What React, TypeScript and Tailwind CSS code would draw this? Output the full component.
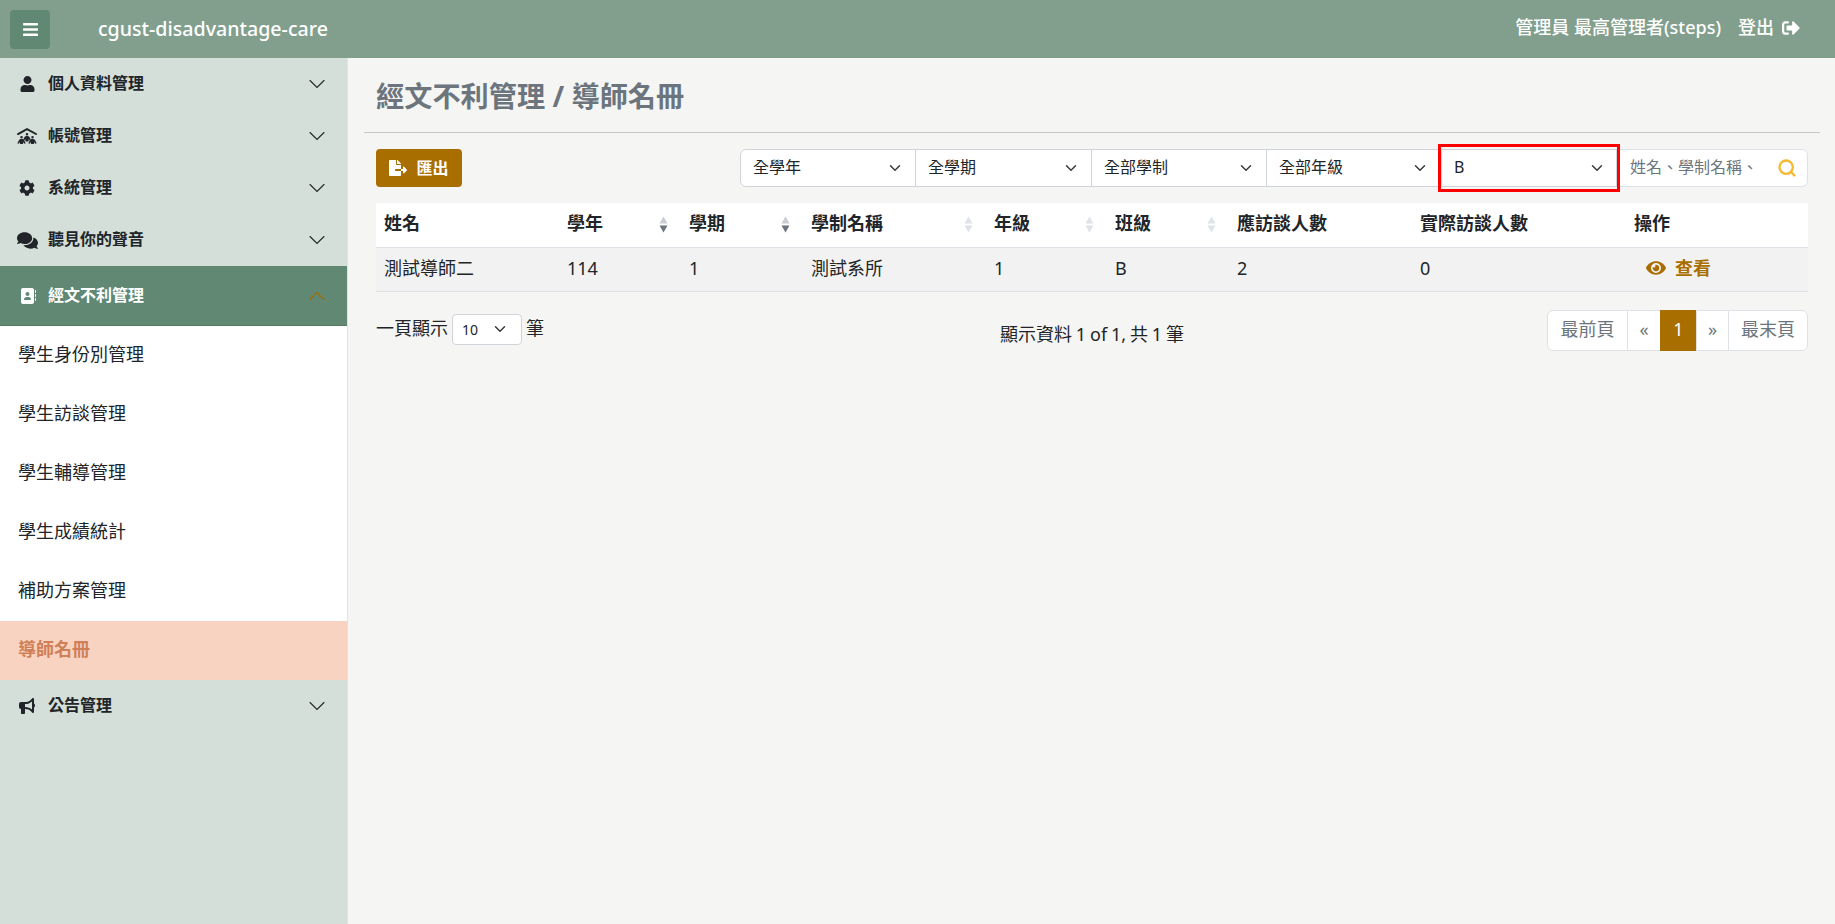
import { ReactNode } from "react";
import { FaBars, FaCog, FaComments, FaEye, FaFileExport, FaSignOutAlt, FaUser } from "react-icons/fa";
import { FaAddressBook, FaBullhorn, FaPeopleRoof } from "react-icons/fa6";
import { Search } from "lucide-react";

function Chevron({ up = false, className = "" }: { up?: boolean; className?: string }) {
    return (
        <svg viewBox="0 0 16 16" className={className} fill="none" stroke="currentColor" strokeWidth="1.1" strokeLinecap="round">
            <path d={up ? "M1 11.5l7-7 7 7" : "M1 4.5l7 7 7-7"} />
        </svg>
    );
}

function SmallChevron({ className = "" }: { className?: string }) {
    return (
        <svg viewBox="0 0 16 16" className={className} fill="none" stroke="#343a40" strokeWidth="2" strokeLinecap="round" strokeLinejoin="round">
            <path d="M2 5l6 6 6-6" />
        </svg>
    );
}

function MenuItem({ icon, label }: { icon: ReactNode; label: string }) {
    return (
        <div className="h-[52px] flex items-center pl-[17px] pr-[22px] text-[#212529]">
            <span className="w-[31px] flex text-[16px]">{icon}</span>
            <span className="flex-1 pb-[2px] text-[16px] font-bold">{label}</span>
            <Chevron className="w-4 h-4" />
        </div>
    );
}

function SubItem({ label, active = false }: { label: string; active?: boolean }) {
    return (
        <div className={active
            ? "h-[59px] flex items-center pl-[18px] pb-[2px] text-[18px] font-bold bg-[#f8d3c1] text-[#d08058]"
            : "h-[59px] flex items-center pl-[18px] pb-[2px] text-[18px] text-[#212529] bg-white"}>
            {label}
        </div>
    );
}

function FilterSelect({ label, className }: { label: string; className: string }) {
    return (
        <div className={"h-[38px] flex items-center justify-between pl-[12px] pr-[14px] bg-white border border-[#ced4da] " + className}>
            <span className="pb-[2px] text-[16px] text-[#212529]">{label}</span>
            <SmallChevron className="w-3 h-3" />
        </div>
    );
}

function SortIcon({ active = false }: { active?: boolean }) {
    return (
        <svg viewBox="0 0 9 17" className="w-[9px] h-[17px] shrink-0">
            <path d="M4.5 0.5l4 7h-8z" fill={active ? "#c9ccd1" : "#dfe2e6"} />
            <path d="M4.5 16.5l4-7h-8z" fill={active ? "#6c757d" : "#dfe2e6"} />
        </svg>
    );
}

function HeaderCell({ label, sort, active }: { label: string; sort?: boolean; active?: boolean }) {
    return (
        <th className="pl-2 pr-[13px] text-left font-bold text-[#212529] text-[18px]">
            <div className="flex items-center justify-between">
                <span className="pb-[2px]">{label}</span>
                {sort && <SortIcon active={active} />}
            </div>
        </th>
    );
}

const pageLink = "h-[41px] pb-[2px] flex items-center justify-center text-[#6c757d] bg-white border border-[#dee2e6] -ml-px";

export default function App() {
    return (
        <div className="w-full h-[924px] flex flex-col overflow-hidden bg-[#f5f5f3] font-['Noto_Sans','Noto_Sans_CJK_TC',sans-serif] text-[16px] text-[#212529]">
            <header className="h-[58px] shrink-0 bg-[#829f8e] flex items-center pl-[10px] pr-[35px] text-white">
                <button className="w-[40px] h-[39px] rounded-[4px] bg-[#618872] flex items-center justify-center">
                    <FaBars className="w-[17px] h-[17px]" />
                </button>
                <span className="ml-[48px] pb-[1px] text-[19.6px] font-medium">cgust-disadvantage-care</span>
                <span className="ml-auto pb-[3px] text-[18px] font-medium">管理員 最高管理者(steps)</span>
                <span className="ml-[17px] pb-[3px] text-[18px] font-medium">登出</span>
                <FaSignOutAlt className="ml-[8px] mb-[2px] w-[18px] h-[18px]" />
            </header>

            <div className="flex-1 flex min-h-0">
                <aside className="w-[348px] shrink-0 bg-[#d4dfd9] border-r border-[#dfe2e6]">
                    <MenuItem icon={<FaUser className="ml-[3px] w-[15px] h-[16px]" />} label="個人資料管理" />
                    <MenuItem icon={<FaPeopleRoof className="w-[20px] h-[16px]" />} label="帳號管理" />
                    <MenuItem icon={<FaCog className="ml-[2px] w-[16px] h-[16px]" />} label="系統管理" />
                    <MenuItem icon={<FaComments className="w-[21px] h-[19px]" />} label="聽見你的聲音" />
                    <div className="h-[60px] flex items-center pl-[20px] pr-[22px] bg-[#618872] border-b border-[#54775f] text-white">
                        <FaAddressBook className="w-[16px] h-[16px]" />
                        <span className="ml-[12px] pb-[2px] flex-1 text-[16px] font-bold">經文不利管理</span>
                        <Chevron up className="w-4 h-4 text-[#a56c00]" />
                    </div>
                    <SubItem label="學生身份別管理" />
                    <SubItem label="學生訪談管理" />
                    <SubItem label="學生輔導管理" />
                    <SubItem label="學生成績統計" />
                    <SubItem label="補助方案管理" />
                    <SubItem label="導師名冊" active />
                    <MenuItem icon={<FaBullhorn className="ml-[2px] w-[16px] h-[16px]" />} label="公告管理" />
                </aside>

                <main className="flex-1 min-w-0 pl-[16px] pr-[15px]">
                    <div className="h-[75px] border-b border-[#c4c6c6] flex items-center pl-[12px] pt-[3px]">
                        <h1 className="text-[28.2px] font-bold text-[#6c757d]">經文不利管理 / 導師名冊</h1>
                    </div>

                    <div className="pl-[12px] pr-[12px]">
                        <div className="mt-[16px] flex items-center h-[38px]">
                            <button className="w-[86px] h-[38px] rounded-[4px] bg-[#a96e00] text-white flex items-center justify-center gap-[9px]">
                                <FaFileExport className="w-[18px] h-[16px]" />
                                <span className="text-[16px] font-bold">匯出</span>
                            </button>
                            <div className="ml-auto flex items-center">
                                <FilterSelect label="全學年" className="w-[176px] rounded-l-[6px]" />
                                <FilterSelect label="全學期" className="w-[177px] -ml-px" />
                                <FilterSelect label="全部學制" className="w-[176px] -ml-px" />
                                <FilterSelect label="全部年級" className="w-[175px] -ml-px" />
                                <div className="relative w-[176px] h-[38px] flex items-center justify-between pl-[12px] pr-[13px] bg-white border border-[#ced4da]">
                                    <span className="pb-[2px] text-[16px] text-[#212529]">B</span>
                                    <SmallChevron className="w-3 h-3" />
                                    <div className="absolute -top-[6px] -bottom-[6px] -left-[4px] -right-[4px] border-[3px] border-[#ff0000]" />
                                </div>
                                <div className="w-[191px] h-[38px] flex items-center pl-[13px] pr-[12px] bg-white border border-[#dee2e6] border-l-0 rounded-r-[6px]">
                                    <span className="flex-1 pb-[2px] overflow-hidden whitespace-nowrap text-[16px] text-[#6c757d]">姓名、學制名稱、</span>
                                    <Search className="-mr-[2px] shrink-0 w-[20px] h-[20px] text-[#f5b82e]" strokeWidth={2.8} />
                                </div>
                            </div>
                        </div>

                        <table className="mt-[16px] w-full table-fixed">
                            <colgroup>
                                <col className="w-[183px]" />
                                <col className="w-[122px]" />
                                <col className="w-[122px]" />
                                <col className="w-[183px]" />
                                <col className="w-[121px]" />
                                <col className="w-[122px]" />
                                <col className="w-[183px]" />
                                <col className="w-[214px]" />
                                <col className="w-[182px]" />
                            </colgroup>
                            <thead>
                                <tr className="h-[44px] bg-white border-b border-[#dee2e6]">
                                    <HeaderCell label="姓名" />
                                    <HeaderCell label="學年" sort active />
                                    <HeaderCell label="學期" sort active />
                                    <HeaderCell label="學制名稱" sort />
                                    <HeaderCell label="年級" sort />
                                    <HeaderCell label="班級" sort />
                                    <HeaderCell label="應訪談人數" />
                                    <HeaderCell label="實際訪談人數" />
                                    <HeaderCell label="操作" />
                                </tr>
                            </thead>
                            <tbody>
                                <tr className="h-[44px] bg-[#f2f2f2] border-b border-[#dee2e6] text-[18px]">
                                    <td className="px-2 pb-[2px]">測試導師二</td>
                                    <td className="px-2 pb-[2px]">114</td>
                                    <td className="px-2 pb-[2px]">1</td>
                                    <td className="px-2 pb-[2px]">測試系所</td>
                                    <td className="px-2 pb-[2px]">1</td>
                                    <td className="px-2 pb-[2px]">B</td>
                                    <td className="px-2 pb-[2px]">2</td>
                                    <td className="px-2 pb-[2px]">0</td>
                                    <td className="px-2 pb-[2px]">
                                        <div className="ml-[12px] flex items-center gap-[9px] text-[#a96e00] font-bold">
                                            <FaEye className="w-[20px] h-[18px]" />
                                            <span>查看</span>
                                        </div>
                                    </td>
                                </tr>
                            </tbody>
                        </table>

                        <div className="mt-[18px] grid grid-cols-3 items-start">
                            <div className="flex items-center text-[18px] pt-[4px]">
                                <span className="pb-[2px]">一頁顯示</span>
                                <div className="ml-[4px] w-[70px] h-[31px] flex items-center justify-between pl-[9px] pr-[15px] bg-white border border-[#ced4da] rounded-[4px]">
                                    <span className="text-[14px]">10</span>
                                    <SmallChevron className="w-3 h-3" />
                                </div>
                                <span className="ml-[4px] pb-[2px]">筆</span>
                            </div>
                            <div className="text-center text-[18px] pt-[11px] [word-spacing:-0.8px]">顯示資料 1 of 1, 共 1 筆</div>
                            <div className="flex justify-end text-[18px]">
                                <div className={pageLink + " w-[81px] rounded-l-[6px]"}>最前頁</div>
                                <div className={pageLink + " w-[34px]"}>«</div>
                                <div className="h-[41px] pb-[2px] w-[37px] -ml-px flex items-center justify-center bg-[#a96e00] text-white">1</div>
                                <div className={pageLink + " w-[33px]"}>»</div>
                                <div className={pageLink + " w-[80px] rounded-r-[6px]"}>最末頁</div>
                            </div>
                        </div>
                    </div>
                </main>
            </div>
        </div>
    );
}
